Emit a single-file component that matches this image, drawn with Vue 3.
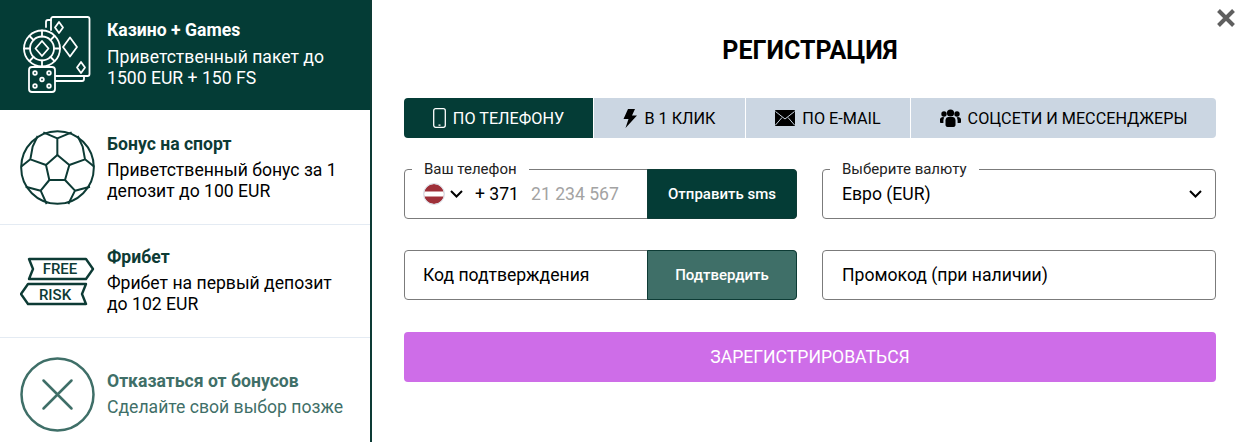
<script setup>
const bonuses = [
  { id: 'casino', title: 'Казино + Games', text: 'Приветственный пакет до 1500 EUR + 150 FS' },
  { id: 'sport', title: 'Бонус на спорт', text: 'Приветственный бонус за 1 депозит до 100 EUR' },
  { id: 'free', title: 'Фрибет', text: 'Фрибет на первый депозит до 102 EUR' },
  { id: 'none', title: 'Отказаться от бонусов', text: 'Сделайте свой выбор позже' }
]
</script>

<template>
  <div class="page">
    <aside class="sidebar">
      <div v-for="b in bonuses" :key="b.id" class="bonus" :class="b.id">
        <div class="bonus-icon">
          <svg v-if="b.id === 'casino'" width="75" height="80" viewBox="0 0 75 80" fill="none" stroke="#fff" stroke-width="1.800" stroke-linejoin="round" stroke-linecap="round">
            <path d="M31 15V4a2 2 0 0 1 2-2h34.500a2 2 0 0 1 2 2v55a2 2 0 0 1-2 2H35" />
            <path d="M31 5h-3a2 2 0 0 0-2 2v5" />
            <path d="M35 66h27a2 2 0 0 0 2-2v-3" />
            <path d="M39 7l4 5.500-4 5.500-4-5.500z" />
            <path d="M50 22.500l7 9.500-7 9.500-7-9.500z" />
            <path d="M61 47l4 5.500-4 5.500-4-5.500z" />
            <circle cx="22" cy="33.500" r="18" fill="#043c36" />
            <circle cx="22" cy="33.500" r="12" />
            <path d="M22 26l6.500 7.500-6.500 7.500-6.500-7.500z" />
            <path d="M22 15.500v6M22 45.500v6M4 33.500h6M34 33.500h6M9.500 21l4 4M34.500 21l-4 4M9.500 46l4-4M34.500 46l-4-4" />
            <rect x="9" y="52" width="26" height="25" rx="3" fill="#043c36" />
            <circle cx="15" cy="58" r="1.800" /><circle cx="29" cy="58" r="1.800" />
            <circle cx="22" cy="64.500" r="1.800" />
            <circle cx="15" cy="71" r="1.800" /><circle cx="29" cy="71" r="1.800" />
          </svg>
          <svg v-else-if="b.id === 'sport'" width="75" height="75" viewBox="30 30 225 225" fill="none" stroke="#0d3b35" stroke-width="6" stroke-linejoin="round">
            <circle cx="142.500" cy="142.500" r="109" />
            <path d="M142 105l36 30-13 45h-47l-10-45z" />
            <path d="M142 105V55M100 37l42 18 43-18" />
            <path d="M178 135l47-17 28 22M225 118l-7-38-15-32" />
            <path d="M108 135l-47-17-28 22M61 118l7-38 15-32" />
            <path d="M165 180l30 32 45-12M195 212l-20 40" />
            <path d="M118 180l-26 32-45-12M92 212l18 40" />
          </svg>
          <svg v-else-if="b.id === 'free'" width="75" height="50" viewBox="0 0 75 50" fill="none" stroke="#0d3b35" stroke-width="2.400" stroke-linejoin="round">
            <path d="M9 3h57l7 10-7 10H9l4-10z" />
            <path d="M1 38l7-10h58l-4 10 4 10H8z" />
            <text x="40" y="18" class="band-text">FREE</text>
            <text x="35" y="44" class="band-text">RISK</text>
          </svg>
          <svg v-else width="75" height="75" viewBox="0 0 75 75" fill="none" stroke="#3f6f68" stroke-width="2.500" stroke-linecap="round">
            <circle cx="37.500" cy="37.500" r="36" />
            <path d="M23.500 23.500l28 28M51.500 23.500l-28 28" />
          </svg>
        </div>
        <div class="bonus-text">
          <div class="bonus-title">{{ b.title }}</div>
          <div class="bonus-desc">{{ b.text }}</div>
        </div>
      </div>
    </aside>

    <main class="main">
      <svg class="close" width="18" height="18" viewBox="0 0 18 18" stroke="#5f5f5f" stroke-width="4">
        <path d="M1.500 1.500l15 15M16.500 1.500l-15 15" />
      </svg>
      <h1 class="heading">РЕГИСТРАЦИЯ</h1>

      <div class="tabs">
        <div class="tab active first">
          <svg width="13" height="20" viewBox="0 0 13 20" fill="none" stroke="#fff" stroke-width="1.300">
            <rect x="0.700" y="0.700" width="11.600" height="18.600" rx="2" />
            <path d="M5.500 17.200h2" />
          </svg>
          ПО ТЕЛЕФОНУ
        </div>
        <div class="tab second">
          <svg width="14" height="20" viewBox="0 0 14 20"><path d="M5 1h7L9 7.500h5L2.500 20 5.500 11H0.500z" fill="#000" /></svg>
          В 1 КЛИК
        </div>
        <div class="tab third">
          <svg width="20" height="16" viewBox="0 0 20 16">
            <rect width="20" height="16" rx="1" fill="#000" />
            <path d="M0.500 1.500L10 9l9.500-7.500M0.500 15l6.500-7.500M19.500 15L13 7.500" fill="none" stroke="#cbd6e2" stroke-width="1" />
          </svg>
          ПО E-MAIL
        </div>
        <div class="tab last">
          <svg width="21" height="18" viewBox="0 0 21 18" fill="#000">
            <circle cx="10.500" cy="4" r="3.600" />
            <circle cx="4" cy="5" r="2.700" />
            <circle cx="17" cy="5" r="2.700" />
            <path d="M5.500 11.500C5.500 9 7 8 8.500 8h4c1.500 0 3 1 3 3.500V16c0 1.200-1 2-2 2h-6c-1 0-2-.8-2-2z" />
            <path d="M4.300 8.500c-.6 1-.9 2-.9 3.500v2H1c-.6 0-1-.5-1-1v-2.500C0 9 1.500 8 3 8z" />
            <path d="M16.700 8.500c.6 1 .9 2 .9 3.500v2H20c.6 0 1-.5 1-1v-2.500C21 9 19.500 8 18 8z" />
          </svg>
          СОЦСЕТИ И МЕССЕНДЖЕРЫ
        </div>
      </div>

      <div class="form">
        <div class="field">
          <span class="legend">Ваш телефон</span>
          <div class="phone">
            <svg width="22" height="22" viewBox="0 0 22 22">
              <clipPath id="flag"><circle cx="11" cy="11" r="10" /></clipPath>
              <g clip-path="url(#flag)">
                <rect width="22" height="22" fill="#9e3039" />
                <rect y="8.500" width="22" height="5" fill="#fff" />
              </g>
              <circle cx="11" cy="11" r="10.500" fill="none" stroke="#d7dde6" />
            </svg>
            <svg class="chevron" width="13" height="8" viewBox="0 0 13 8" fill="none" stroke="#000" stroke-width="2">
              <path d="M1 1l5.500 5.500L12 1" />
            </svg>
            <span class="code">+ 371</span>
            <input class="input" placeholder="21 234 567" />
          </div>
          <button class="side-btn">Отправить sms</button>
        </div>

        <div class="field">
          <span class="legend">Выберите валюту</span>
          <div class="select">
            <span>Евро (EUR)</span>
            <svg width="13" height="8" viewBox="0 0 13 8" fill="none" stroke="#000" stroke-width="2">
              <path d="M1 1l5.500 5.500L12 1" />
            </svg>
          </div>
        </div>

        <div class="field">
          <input class="input code-input" placeholder="Код подтверждения" />
          <button class="side-btn muted">Подтвердить</button>
        </div>

        <div class="field">
          <input class="input promo" placeholder="Промокод (при наличии)" />
        </div>
      </div>

      <button class="submit">ЗАРЕГИСТРИРОВАТЬСЯ</button>
    </main>
  </div>
</template>

<style>
html, body {
  margin: 0;
  background: #fff;
  overflow: hidden;
}
</style>

<style scoped>
.page {
  display: flex;
  width: 1245px;
  height: 442px;
  overflow: hidden;
  font-family: Roboto, "Liberation Sans", sans-serif;
  background: #fff;
}

.sidebar {
  flex: none;
  width: 370px;
  height: 442px;
  border-right: 2px solid #0d3b35;
  overflow: hidden;
}

.bonus {
  display: flex;
  align-items: center;
  gap: 12px;
  padding-left: 20px;
  border-bottom: 1px solid #e4ebf3;
  color: #000;
}

.bonus.casino {
  height: 110px;
  background: #043c36;
  color: #fff;
  border-bottom: 0;
}

.bonus.sport {
  height: 114px;
}

.bonus.free {
  height: 112px;
}

.bonus.none {
  height: 112px;
  border-bottom: 0;
  color: #3f6f68;
}

.bonus-icon {
  flex: none;
  display: flex;
  width: 75px;
}

.bonus-text {
  width: 240px;
}

.casino .bonus-text {
  padding-bottom: 1px;
}

.sport .bonus-text {
  padding-top: 2px;
}

.none .bonus-text {
  padding-top: 1px;
}

.bonus-title {
  margin-bottom: 5px;
  font-size: 17.6px;
  line-height: 21px;
  font-weight: 700;
  color: #0d3b35;
}

.casino .bonus-title {
  color: #fff;
  margin-bottom: 6px;
}

.none .bonus-title {
  color: #3f6f68;
}

.bonus-desc {
  font-size: 17.6px;
  line-height: 21px;
}

.band-text {
  font-family: Roboto, sans-serif;
  font-size: 15px;
  font-weight: 500;
  text-anchor: middle;
  fill: #0d3b35;
  stroke: none;
}

.main {
  position: relative;
  flex: 1;
  padding: 0 29px 0 32px;
}

.close {
  position: absolute;
  top: 9px;
  right: 10px;
}

.heading {
  margin: 0;
  padding: 36px 0 32px;
  font-size: 25px;
  line-height: 30px;
  font-weight: 700;
  text-align: center;
  color: #000;
}

.tabs {
  display: flex;
  gap: 1px;
  height: 40px;
  border-radius: 4px;
  overflow: hidden;
}

.tab {
  display: flex;
  align-items: center;
  justify-content: center;
  gap: 7px;
  background: #cbd6e2;
  font-size: 16.2px;
  color: #000;
  white-space: nowrap;
}

.tab.first {
  width: 189px;
}

.tab.second {
  width: 151px;
}

.tab.third {
  width: 164px;
}

.tab.last {
  flex: 1;
}

.tab.active {
  background: #043c36;
  color: #fff;
}

.form {
  display: grid;
  grid-template-columns: 393px 394px;
  column-gap: 25px;
  row-gap: 31px;
  margin-top: 31px;
}

.field {
  position: relative;
  display: flex;
  height: 50px;
  box-sizing: border-box;
  border: 1px solid #7b7b7b;
  border-radius: 4px;
}

.legend {
  position: absolute;
  top: -9px;
  left: 7px;
  padding: 0 12px;
  font-size: 15px;
  line-height: 17px;
  color: #222;
  background: #fff;
}

.phone {
  flex: 1;
  display: flex;
  align-items: center;
  padding-left: 18px;
  min-width: 0;
}

.chevron {
  margin-left: 5px;
}

.code {
  margin-left: 12px;
  font-size: 17.6px;
  color: #000;
  white-space: nowrap;
}

.input {
  flex: 1;
  min-width: 0;
  border: 0;
  outline: 0;
  padding: 0 0 0 12px;
  background: transparent;
  font-family: inherit;
  font-size: 17.6px;
  color: #000;
}

.input::placeholder {
  color: #a3a3a3;
  opacity: 1;
}

.code-input {
  padding-left: 18px;
  border-radius: 4px;
}

.promo {
  padding-left: 19px;
  border-radius: 4px;
}

.code-input::placeholder,
.promo::placeholder {
  color: #000;
}

.side-btn {
  flex: none;
  width: 150px;
  margin: -1px -1px -1px 0;
  border: 1px solid #0d3b35;
  border-radius: 0 4px 4px 0;
  background: #043c36;
  color: #fff;
  font-family: inherit;
  font-size: 15px;
  font-weight: 500;
}

.side-btn.muted {
  background: #3f6f68;
}

.select {
  flex: 1;
  display: flex;
  align-items: center;
  justify-content: space-between;
  padding: 0 13px 0 19px;
  font-size: 17.6px;
  color: #000;
}

.submit {
  display: block;
  width: 100%;
  height: 50px;
  margin-top: 32px;
  border: 0;
  border-radius: 4px;
  background: #ce6de8;
  color: #fff;
  font-family: inherit;
  font-size: 17.6px;
}
</style>
